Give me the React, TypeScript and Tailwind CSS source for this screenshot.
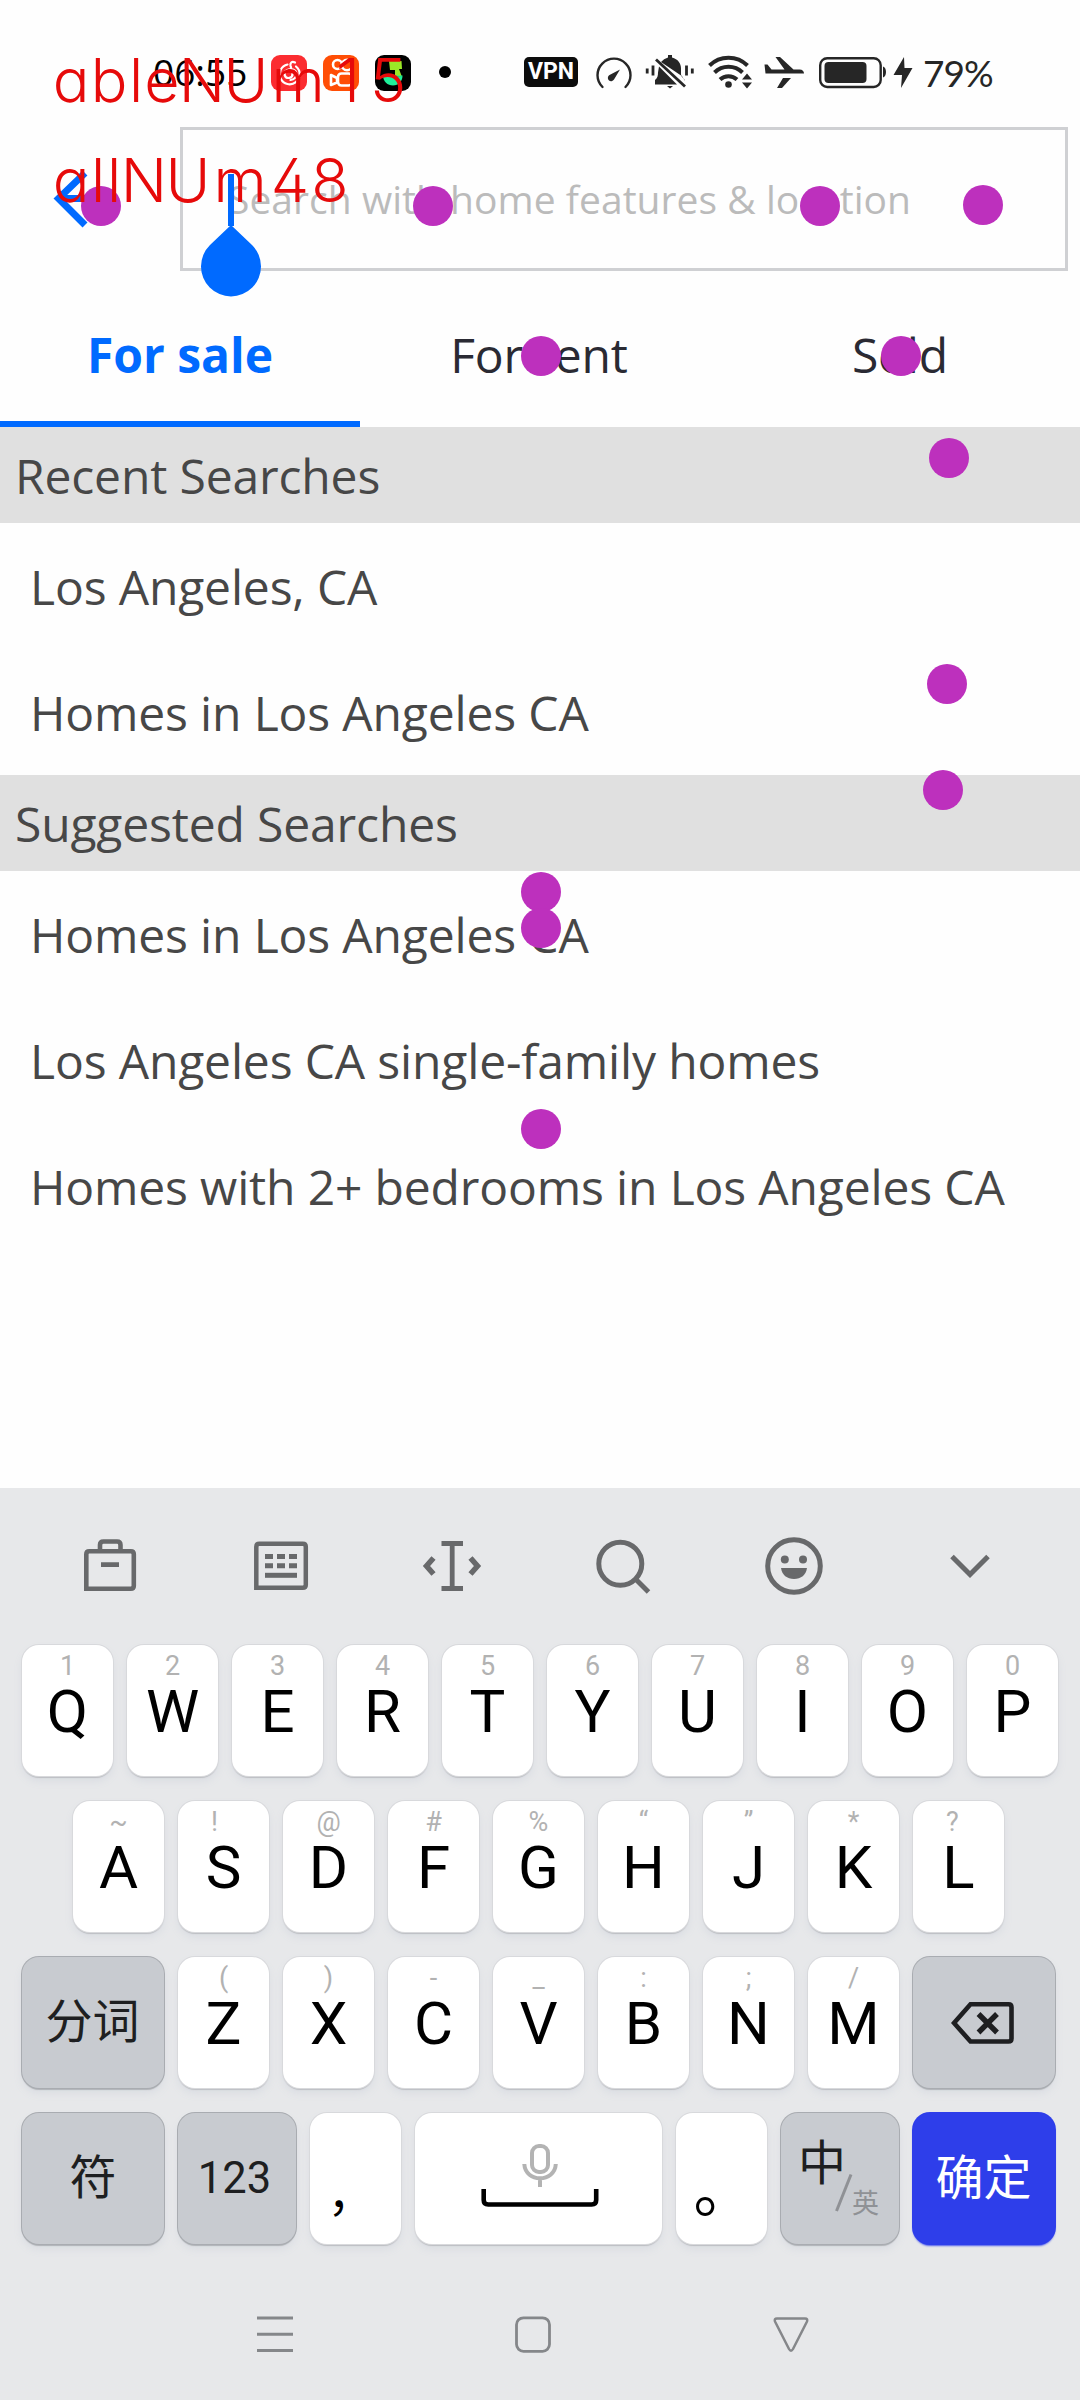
import React from "react";

const marks: [number, number][] = [
  [100, 205], [432, 205], [819, 205], [982, 204],
  [540, 355], [900, 355], [948, 457], [946, 683],
  [942, 789], [540, 891], [540, 927], [540, 1128],
];

function StrokeLabel({ chars }: { chars: [string, number][] }) {
  return (
    <div className="flex h-[60px] leading-[60px] text-[61px] font-light text-[#e60a0a] font-['Inter',sans-serif] [font-feature-settings:'cv11','ss01']">
      {chars.map(([c, w], i) => (
        <span key={i} className="flex justify-center" style={{ width: w }}>{c}</span>
      ))}
    </div>
  );
}

function StatusBar() {
  return (
    <div className="flex h-[127px] pt-[52px]">
      <div className="w-[99px] ml-[153px] h-[40px] leading-[40px] text-[37px] font-medium text-black">06:55</div>
      <svg className="ml-[19px] mt-[3px]" width="140" height="36" viewBox="0 0 140 36">
        <rect width="36" height="36" rx="9" fill="#fb2c30" />
        <g fill="none" stroke="#fff" strokeWidth="2.200" strokeLinecap="round">
          <path d="M16.500 9.500A10 10 0 1 0 25 11.500" />
          <path d="M24 7.500c-3-1.500-5 0-4.500 3l2 8a4 4 0 1 1-6-3c4-3 10-1 10 4-.3 3-3 5-6 5.500" />
        </g>
        <rect x="52" width="36" height="36" rx="9" fill="#ff4d05" />
        <g fill="none" stroke="#fff" strokeWidth="2.600" strokeLinejoin="round">
          <circle cx="66.500" cy="9.500" r="4.500" />
          <circle cx="76" cy="10" r="5.200" />
          <rect x="67" y="18.500" width="14" height="12" rx="3.500" />
          <path d="M60 20l6 3v4.500l-6 2.500z" />
        </g>
        <rect x="104" width="36" height="36" rx="9" fill="#000" />
        <path d="M118 6h12.500l.5 8h-3l3 8h-7v-7h-5z" fill="#9be827" />
        <path d="M112 20.500h19.500c0 6-4 10-9.500 10s-10-4-10-10z" fill="#1ef09a" />
        <path d="M109 22l10-2 13 2z" fill="#21c77c" />
      </svg>
      <div className="ml-[28px] mt-[14px] size-3 rounded-full bg-black" />
      <div className="ml-[73px] mt-[5px] flex h-[30px] w-[54px] items-center justify-center rounded-[5px] bg-[#0c0c0c] text-[23px] font-bold text-white font-['Roboto',sans-serif]">VPN</div>
      <svg className="ml-[12px]" width="330" height="40" viewBox="590 52 330 40" fill="#262626">
        <path d="M602.500 87A16.500 16.500 0 1 1 625.500 87" fill="none" stroke="#262626" strokeWidth="2.400" strokeLinecap="round" />
        <path d="M620 69.500L614 79.500a3.300 3.300 0 1 1-4.500-4.500z" />
        <path d="M661 62a13 13 0 0 1 7-4.500v-2.500h4v2.500c6 1.500 9 6 9 11v7z" />
        <path d="M659 66.500L677 84.500h-22v-4.500c2.500-2 3-4 3-7.500z" />
        <path d="M656 59.500l29 27" stroke="#262626" strokeWidth="2.800" />
        <path d="M681 74.500c.5 3.500 4 4 4 6.500z" />
        <path d="M667 86h6l-3 2.500z" />
        <path d="M647.200 68.500v5M653 65.500v10M686.500 65.500v10M692.300 68.500v5" stroke="#262626" strokeWidth="2.800" />
        <g fill="none" stroke="#262626" strokeWidth="4">
          <path d="M709.500 65.500a27 27 0 0 1 38 0" />
          <path d="M714.500 72.500a20 20 0 0 1 28 0" />
          <path d="M720 79.500a12.500 12.500 0 0 1 17 0" />
        </g>
        <circle cx="728.500" cy="84.500" r="3.300" />
        <path d="M742 79.500l5-6 5 6zM742 82.500l5 6 5-6z" />
        <path d="M764.500 64.500h3l4 5h13l-9-12.500h4.500l13.500 12.500h6c3 0 4.500 2 4.500 4h-38.500z" />
        <path d="M783 78h8l-9 10h-5z" />
        <rect x="820.200" y="58.200" width="60.500" height="28.800" rx="7" fill="none" stroke="#262626" strokeWidth="2.400" />
        <rect x="824.500" y="62" width="42" height="21" rx="4" />
        <path d="M883 66.500c4 1 4 10 0 11z" />
        <path d="M904 57l-10.500 18h8.500l-1 13 11.500-20h-8z" />
      </svg>
      <div className="ml-[3px] h-[42px] leading-[42px] text-[37px] text-[#262626] tracking-[-1px] font-['Lato',sans-serif]">79%</div>
    </div>
  );
}

function SearchRow() {
  return (
    <div className="flex h-[144px]">
      <div className="w-[180px] pt-[42px] pl-[52px]">
        <svg width="64" height="60" viewBox="0 0 64 60" fill="none" stroke="#006aff" strokeWidth="7">
          <path d="M33 4L6.500 29.500 33 56M6 29.500h52" />
        </svg>
      </div>
      <div className="relative flex w-[888px] items-center border-[3px] border-[#cfd0d3] pl-[45px]">
        <span className="whitespace-nowrap text-[39px] tracking-[0.04px] text-[#bbbbbb]">Search with home features &amp; location</span>
        <svg className="absolute left-[18px] top-[44px]" width="60" height="124" viewBox="0 0 60 124" fill="#006aff">
          <rect x="27" width="6" height="52" />
          <path d="M30 51L51 71A30 30 0 1 1 9 71z" />
        </svg>
      </div>
    </div>
  );
}

function Section({ title, items }: { title: string; items: string[] }) {
  return (
    <section>
      <h2 className="flex h-24 items-center bg-[#e0e0e0] pl-[15px] pt-[2px]">{title}</h2>
      {items.map((t) => (
        <div key={t} className="flex h-[126px] items-center whitespace-nowrap pl-[30px] pt-[2px]">{t}</div>
      ))}
    </section>
  );
}

const keyBase = "flex h-[131px] shrink-0 rounded-[17px]";
const white = "bg-white text-black shadow-[0_0_0_1px_#d8d9dc,0_2px_1px_0px_#bcbec2,0_5px_8px_#d9dce2]";
const gray = "bg-[#c8cbd0] text-[#1e1f21] shadow-[0_0_0_1px_#a9acb1,0_2px_1px_0px_#b0b3b7,0_5px_8px_#d9dce2]";

function LetterKey({ letter, hint, shift = 0 }: { letter: string; hint: string; shift?: number }) {
  return (
    <div className={`${keyBase} ${white} w-[91px] flex-col items-center pt-[6px] font-['Roboto',sans-serif]`}>
      <span className="relative h-[31px] text-[27px] leading-[31px] text-[#b2b2b2]" style={{ left: shift }}>{hint}</span>
      <span className="h-[60px] text-[60px] leading-[60px]">{letter}</span>
    </div>
  );
}

function Keys({ data }: { data: [string, string, number?][] }) {
  return <>{data.map(([l, h, s]) => <LetterKey key={l} letter={l} hint={h} shift={s} />)}</>;
}

function Toolbar() {
  const c = "#68696b";
  return (
    <div className="flex h-[157px] gap-[99px] pl-[74px] pt-[42px]">
      <svg width="72" height="72" viewBox="74 1530 72 72" fill="none" stroke={c} strokeWidth="4.600">
        <path d="M86.300 1588.700v-34.500q0-3 3-3h41.500q3 0 3 3v31.500q0 3-3 3zM100 1551v-6q0-3.500 3.500-3.500h13.500q3.500 0 3.500 3.500v6M101 1564.600h18" />
      </svg>
      <svg width="72" height="72" viewBox="245 1530 72 72" fill="none" stroke={c} strokeWidth="4.500">
        <path d="M256.300 1587.700v-41q0-3 3-3h43.500q3 0 3 3v38q0 3-3 3z" />
        <path d="M265 1556.600h32M265 1565.800h32" strokeDasharray="8 4" strokeWidth="5" />
        <path d="M265 1575.300h32" strokeWidth="5" />
      </svg>
      <svg width="72" height="72" viewBox="416 1530 72 72" fill="none" stroke={c} strokeWidth="4.800">
        <path d="M441.500 1543.500h21.500M441.500 1588.500h21.500M452.200 1543.500v45" />
        <path d="M433.500 1558l-7 8 7 8M470.500 1558l7 8-7 8" strokeWidth="5.500" />
      </svg>
      <svg width="72" height="72" viewBox="587 1530 72 72" fill="none" stroke={c} strokeWidth="5">
        <circle cx="620.300" cy="1563.800" r="21.500" />
        <path d="M635 1578.500l13.500 13.500" />
      </svg>
      <svg width="72" height="72" viewBox="758 1530 72 72" fill="none" stroke={c} strokeWidth="5">
        <circle cx="794" cy="1566" r="26.300" />
        <g fill={c} stroke="none">
          <circle cx="784.800" cy="1559.500" r="4" />
          <circle cx="803" cy="1559.500" r="4" />
          <path d="M781 1568h26c-1 7-6 11-13 11s-12-4-13-11z" />
        </g>
      </svg>
      <svg width="72" height="72" viewBox="929 1530 72 72" fill="none" stroke={c} strokeWidth="5">
        <path d="M952 1556.500l18 18 18-18" />
      </svg>
    </div>
  );
}

const cjk = "font-['Roboto','Noto_Sans_CJK_SC',sans-serif]";

function Keyboard() {
  return (
    <div className="h-[912px] bg-[#e7e8ea]">
      <Toolbar />
      <div className="flex flex-col gap-[25px] pl-[22px]">
        <div className="flex gap-[14px]">
          <Keys data={[["Q", "1"], ["W", "2"], ["E", "3"], ["R", "4"], ["T", "5"], ["Y", "6"], ["U", "7"], ["I", "8"], ["O", "9"], ["P", "0"]]} />
        </div>
        <div className="flex gap-[14px] pl-[51px]">
          <Keys data={[["A", "~"], ["S", "!", -9], ["D", "@"], ["F", "#"], ["G", "%"], ["H", "“"], ["J", "”"], ["K", "*"], ["L", "?", -6]]} />
        </div>
        <div className="flex gap-[14px]">
          <div className={`${keyBase} ${gray} ${cjk} w-[142px] items-center justify-center pr-px text-[47px]`}>分词</div>
          <Keys data={[["Z", "("], ["X", ")"], ["C", "-"], ["V", "_"], ["B", ":"], ["N", ";"], ["M", "/"]]} />
          <div className={`${keyBase} ${gray} w-[142px] items-center justify-center pr-[3px]`}>
            <svg width="64" height="44" viewBox="951 2000 64 44" fill="none" stroke="#1e1f21" strokeWidth="4.600">
              <path d="M954 2022l16.500-18.700h38q3 0 3 3v31.200q0 3-3 3h-38z" />
              <path d="M978.500 2013l18.500 18.500M997 2013l-18.500 18.500" strokeWidth="5.400" />
            </svg>
          </div>
        </div>
        <div className="flex gap-[14px]">
          <div className={`${keyBase} ${gray} ${cjk} w-[142px] items-center justify-center text-[47px]`}>符</div>
          <div className={`${keyBase} ${gray} ${cjk} w-[118px] items-center justify-center pr-[5px] text-[43.500px]`}>123</div>
          <div className={`${keyBase} ${white} w-[91px] justify-center pr-[9px] pt-[36px] text-[47px] leading-[84px] font-['Noto_Sans_CJK_SC',sans-serif]`}>，</div>
          <div className={`${keyBase} ${white} w-[247px] items-start justify-center pl-[3px] pt-[29px]`}>
            <svg width="120" height="66" viewBox="480 2141 120 66" fill="none">
              <g stroke="#b3b3b3" strokeWidth="4">
                <rect x="532" y="2145" width="16" height="26" rx="7" />
                <path d="M524.300 2163c1 19 30.500 19 31.500 0M540 2177v9" />
              </g>
              <path d="M483.700 2188v11q0 4.500 4.500 4.500h103.500q4.500 0 4.500-4.500v-11" stroke="#000" strokeWidth="4.600" />
            </svg>
          </div>
          <div className={`${keyBase} ${white} w-[91px] justify-center pl-[4px] pt-[33px] text-[60px] leading-[80px] font-['Noto_Sans_CJK_SC',sans-serif]`}>。</div>
          <div className={`${keyBase} ${gray} ${cjk} relative w-[118px]`}>
            <span className="absolute left-[17px] top-[27px] text-[48px] leading-[48px]">中</span>
            <svg className="absolute left-[54px] top-[60px]" width="18" height="40" viewBox="0 0 18 40"><path d="M1.500 38L16 1.500" stroke="#8f9195" strokeWidth="3" /></svg>
            <span className="absolute left-[71px] top-[78px] text-[27px] leading-[27px] text-[#8f9195]">英</span>
          </div>
          <div className={`${keyBase} ${cjk} w-[142px] items-center justify-center pr-px bg-[#2e3eea] text-[48px] text-white shadow-[0_0_0_1px_#2e3eea,0_2px_2px_#4a58ee]`}>确定</div>
        </div>
      </div>
      <div className="flex pl-[256px] pt-[71px] text-[#85878a]">
        <svg width="38" height="38" viewBox="0 0 38 38" stroke="currentColor" strokeWidth="3"><path d="M1 3h36M1 19.300h36M1 35.500h36" /></svg>
        <svg className="ml-[220px]" width="38" height="38" viewBox="0 0 38 38" fill="none" stroke="currentColor" strokeWidth="2.800"><rect x="2.500" y="2.800" width="33" height="33.500" rx="7" /></svg>
        <svg className="ml-[220px]" width="38" height="38" viewBox="0 0 38 38" fill="none" stroke="currentColor" strokeWidth="2.500" strokeLinejoin="round"><path d="M5 3.500h28q3 0 2 3L21 34q-2 3.500-4 0L3 6.500q-1-3 2-3z" /></svg>
      </div>
    </div>
  );
}

export default function App() {
  return (
    <div className="relative flex h-[2400px] w-[1080px] flex-col overflow-hidden bg-[#fefefe] text-[#474747] font-['Open_Sans',sans-serif]">
      <StatusBar />
      <SearchRow />
      <div className="mt-[10px] grid h-[146px] grid-cols-3 text-[48px] text-[#2a2a33]">
        <div className="relative flex items-center justify-center pt-[2px] font-bold text-[#006aff]">
          For sale
          <div className="absolute inset-x-0 bottom-0 h-[6px] bg-[#006aff]" />
        </div>
        <div className="flex items-center justify-center pt-[2px] pr-[2px] tracking-[-0.15px]">For rent</div>
        <div className="flex items-center justify-center pt-[2px] tracking-[-0.15px]">Sold</div>
      </div>
      <div className="grow text-[48px] tracking-[-0.15px]">
        <Section title="Recent Searches" items={["Los Angeles, CA", "Homes in Los Angeles CA"]} />
        <Section title="Suggested Searches" items={["Homes in Los Angeles CA", "Los Angeles CA single-family homes", "Homes with 2+ bedrooms in Los Angeles CA"]} />
      </div>
      <Keyboard />
      {marks.map(([x, y], i) => (
        <div key={i} className="absolute size-10 rounded-full bg-[#bd30bd]" style={{ left: x - 19.5, top: y - 19.5 }} />
      ))}
      <div className="absolute left-[52px] top-[50px]">
        <StrokeLabel chars={[["a", 38], ["b", 38], ["l", 16], ["e", 36], ["N", 44], ["U", 44], ["m", 60], ["1", 40], ["5", 40]]} />
      </div>
      <div className="absolute left-[52px] top-[150px]">
        <StrokeLabel chars={[["a", 38], ["l", 16], ["l", 16], ["N", 44], ["U", 44], ["m", 60], ["4", 40], ["8", 40]]} />
      </div>
    </div>
  );
}
